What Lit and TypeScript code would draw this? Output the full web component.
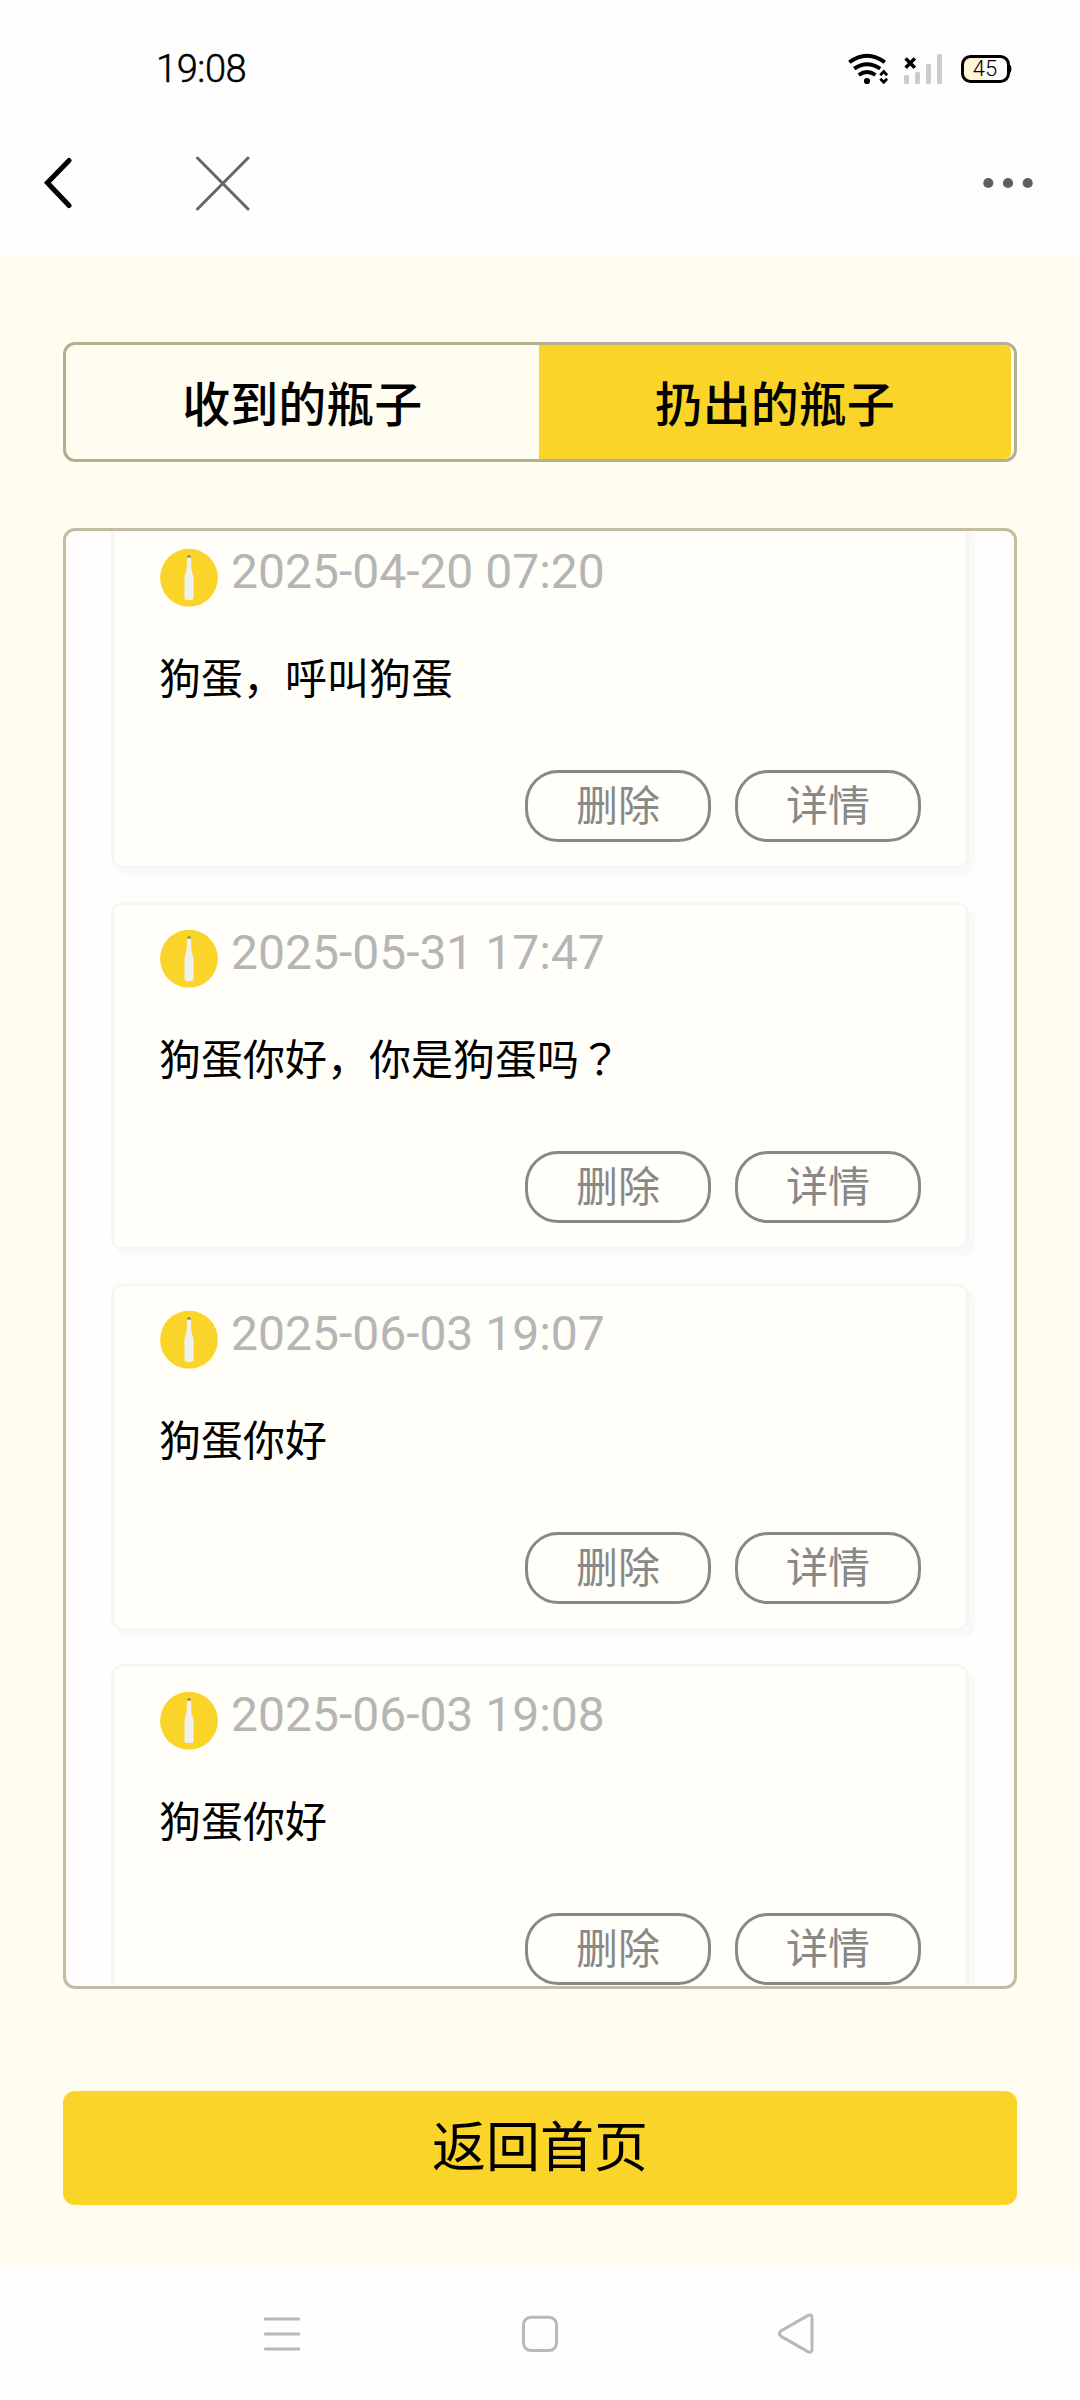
import { LitElement, html, css } from "lit";
import { customElement, property, state } from "lit/decorators.js";
import { classMap } from "lit/directives/class-map.js";

interface Bottle {
  time: string;
  text: string;
}

@customElement("status-bar")
class StatusBar extends LitElement {
  static styles = css`
    :host {
      display: flex;
      align-items: flex-start;
      height: 110px;
      box-sizing: border-box;
      padding: 50px 68px 0 156px;
    }
    .time {
      font: 300 38px/38px Roboto, sans-serif;
      letter-spacing: -0.4px;
      color: #000;
      -webkit-text-stroke: 0.5px #000;
    }
    .icons {
      display: flex;
      gap: 15px;
      margin-left: auto;
    }
    svg {
      display: block;
    }
    .level {
      font: 300 22px Roboto, sans-serif;
    }
  `;

  render() {
    return html`
      <div class="time">19:08</div>
      <div class="icons">
        <svg width="42" height="36" viewBox="847 50 42 36" fill="none" stroke="#000" stroke-width="3.9">
          <path d="M849.3 62.2Q867 49.2 884.8 62.2" />
          <path d="M854.2 68.7Q867 59.6 880.2 68.7" />
          <path d="M858.8 75Q867 69 875.4 75" />
          <circle cx="867" cy="81" r="3.1" fill="#000" stroke="none" />
          <path d="M880.3 75.2L883.7 71.6L887.1 75.2M880.3 78.8L883.7 82.2L887.1 78.8" stroke-width="2.8" />
        </svg>
        <svg width="39" height="36" viewBox="904 50 39 36">
          <g fill="#ccc">
            <rect x="904" y="75" width="5" height="9" rx="1.5" />
            <rect x="915" y="72" width="5" height="12" rx="1.5" />
            <rect x="926" y="64" width="5" height="20" rx="1.5" />
            <rect x="937" y="54" width="5" height="30" rx="1.5" />
          </g>
          <path d="M905.6 58.4L914.8 67.8M914.8 58.4L905.6 67.8" stroke="#000" stroke-width="3.5" />
        </svg>
        <svg width="54" height="36" viewBox="958 50 54 36">
          <rect x="962.5" y="56.5" width="46" height="25" rx="8" fill="#fff" />
          <path d="M984 56.5H970.5a8 8 0 0 0 -8 8v9a8 8 0 0 0 8 8H984z" fill="#fff3d8" />
          <rect x="962.5" y="56.5" width="46" height="25" rx="8" fill="none" stroke="#000" stroke-width="3" />
          <path d="M1009 63.5q2.5 2 2.5 5.5t-2.5 5.5z" fill="#000" />
          <text class="level" x="985" y="76.2" text-anchor="middle">45</text>
        </svg>
      </div>
    `;
  }
}

@customElement("title-bar")
class TitleBar extends LitElement {
  static styles = css`
    :host {
      display: flex;
      align-items: center;
      height: 145px;
      box-sizing: border-box;
      padding: 1px 46px 0 42px;
    }
    svg {
      display: block;
    }
    .close {
      margin-left: 122px;
    }
    .more {
      margin-left: auto;
    }
  `;

  render() {
    return html`
      <svg width="30" height="52" viewBox="0 0 30 52" fill="none" stroke="#000" stroke-width="5" stroke-linecap="round">
        <path d="M27 3.5L5.4 25.8L27 48.5" />
      </svg>
      <svg class="close" width="58" height="56" viewBox="0 0 58 56" fill="none" stroke="#666" stroke-width="3" stroke-linecap="round">
        <path d="M3.5 3L54 54M54 3L3.5 54" />
      </svg>
      <svg class="more" width="52" height="12" viewBox="0 0 52 12" fill="#5f5f5b">
        <circle cx="6.3" cy="6" r="5.1" />
        <circle cx="26" cy="6" r="5.1" />
        <circle cx="45.7" cy="6" r="5.1" />
      </svg>
    `;
  }
}

@customElement("bottle-card")
class BottleCard extends LitElement {
  @property({ attribute: false }) bottle!: Bottle;

  static styles = css`
    :host {
      display: flex;
      flex-direction: column;
      flex: none;
      box-sizing: border-box;
      height: 348px;
      padding: 24px 45px;
      border: 3px solid #f6f6f5;
      border-radius: 12px;
      background: #fffef8;
      box-shadow: 6px 6px 0 #f9f9f9;
    }
    .head {
      display: flex;
      gap: 12px;
      height: 60px;
    }
    .time {
      font: 400 48px/56px Roboto, sans-serif;
      margin-top: -4px;
      color: #b5b5b5;
    }
    .text {
      margin-top: 38px;
      font-size: 42px;
      line-height: 60px;
      color: #000;
    }
    /* The TC face sets the question mark in the middle of its cell. */
    .mark {
      font-family: "Noto Sans CJK TC", sans-serif;
    }
    .actions {
      display: flex;
      justify-content: flex-end;
      gap: 24px;
      margin-top: auto;
    }
    .action {
      box-sizing: border-box;
      width: 186px;
      height: 72px;
      padding: 0 0 6px;
      border: 3px solid #888;
      border-radius: 33px;
      background: none;
      font: inherit;
      font-size: 42px;
      line-height: 60px;
      text-align: center;
      color: #888;
    }
  `;

  render() {
    return html`
      <div class="head">
        <svg width="60" height="60" viewBox="0 0 60 60">
          <circle cx="30" cy="29.7" r="28.9" fill="#fad428" />
          <path
            d="M28 9.5H32L32.3 19.5Q32.6 23 33.6 25.5Q34.6 28 34.6 31V49.5Q34.6 52 32 52H28Q25.4 52 25.4 49.5V31Q25.4 28 26.4 25.5Q27.4 23 27.7 19.5Z"
            fill="#f0f0ec"
          />
          <path d="M28 9.5Q28 7 30 7Q32 7 32 9.5Z" fill="#8f8350" />
        </svg>
        <div class="time">${this.bottle.time}</div>
      </div>
      <div class="text">${this.bottle.text.split(/(？)/).map((part) => (part === "？" ? html`<span class="mark" lang="zh-TW">？</span>` : part))}</div>
      <div class="actions">
        <button class="action">删除</button>
        <button class="action">详情</button>
      </div>
    `;
  }
}

@customElement("nav-bar")
class NavBar extends LitElement {
  static styles = css`
    :host {
      display: flex;
      justify-content: space-between;
      align-items: center;
      height: 133px;
      box-sizing: border-box;
      padding: 1px 264px 0;
      background: #fefefe;
    }
    svg {
      display: block;
    }
  `;

  render() {
    return html`
      <svg width="38" height="42" viewBox="0 0 38 42" fill="#b8b8b8">
        <rect y="4.5" width="36" height="3" rx="1" />
        <rect y="19.5" width="36" height="3" rx="1" />
        <rect y="34.5" width="36" height="3" rx="1" />
      </svg>
      <svg width="36" height="42" viewBox="0 0 36 42" fill="none" stroke="#b8b8b8" stroke-width="3">
        <rect x="1.5" y="4.2" width="33" height="33.4" rx="7.5" />
      </svg>
      <svg width="38" height="42" viewBox="0 0 38 42" fill="none" stroke="#b8b8b8" stroke-width="3">
        <path d="M30.2 2.4L3.2 17.8Q-0.4 20.6 3.2 23.4L30.2 38.8Q34 40.2 34 36.2V5Q34 1 30.2 2.4Z" />
      </svg>
    `;
  }
}

@customElement("app-root")
class AppRoot extends LitElement {
  @state() private tab = 1;

  private tabs = ["收到的瓶子", "扔出的瓶子"];

  private bottles: Bottle[] = [
    { time: "2025-04-20 07:20", text: "狗蛋，呼叫狗蛋" },
    { time: "2025-05-31 17:47", text: "狗蛋你好，你是狗蛋吗？" },
    { time: "2025-06-03 19:07", text: "狗蛋你好" },
    { time: "2025-06-03 19:08", text: "狗蛋你好" },
  ];

  static styles = css`
    :host {
      display: flex;
      flex-direction: column;
      width: 1080px;
      height: 2400px;
      overflow: hidden;
      background: #fefefe;
      font-family: "Noto Sans CJK SC", sans-serif;
    }
    .page {
      display: flex;
      flex-direction: column;
      flex: 1;
      min-height: 0;
      box-sizing: border-box;
      padding: 87px 63px 62px;
      background: #fffcf0;
    }
    .tabs {
      display: flex;
      box-sizing: border-box;
      height: 120px;
      padding-right: 3px;
      border: 3px solid #b3af90;
      border-radius: 12px;
      overflow: hidden;
    }
    .tab {
      flex: 1;
      padding: 0 0 3px;
      border: 0;
      background: none;
      font: inherit;
      font-size: 48px;
      font-weight: 500;
      color: #000;
    }
    .tab.active {
      background: #fad428;
      border-radius: 0 6px 6px 0;
    }
    .panel {
      box-sizing: border-box;
      height: 1461px;
      margin-top: 66px;
      padding: 0 45px;
      border: 3px solid #c3bda3;
      border-radius: 12px;
      background: #fffefd;
      overflow: hidden;
    }
    .list {
      display: flex;
      flex-direction: column;
      gap: 33px;
      margin-top: -10px;
    }
    .home {
      height: 114px;
      margin-top: 102px;
      padding: 0 0 9px;
      border: 0;
      border-radius: 12px;
      background: #fad428;
      font: inherit;
      font-size: 54px;
      color: #000;
    }
  `;

  render() {
    return html`
      <status-bar></status-bar>
      <title-bar></title-bar>
      <main class="page">
        <div class="tabs">
          ${this.tabs.map(
            (label, i) => html`
              <button class=${classMap({ tab: true, active: i === this.tab })} @click=${() => (this.tab = i)}>${label}</button>
            `
          )}
        </div>
        <section class="panel">
          <div class="list">${this.bottles.map((b) => html`<bottle-card .bottle=${b}></bottle-card>`)}</div>
        </section>
        <button class="home">返回首页</button>
      </main>
      <nav-bar></nav-bar>
    `;
  }
}
